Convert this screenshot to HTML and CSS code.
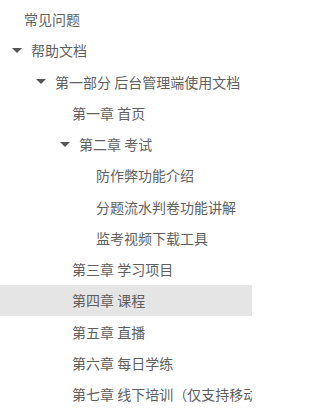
FILE: index.html
```html
<!DOCTYPE html>
<html lang="zh">
<head>
<meta charset="utf-8">
<link rel="stylesheet" href="styles.css">
</head>
<body>
<ul class="tree">
  <li class="node lvl1 leaf"><span class="label">常见问题</span></li>
  <li class="node lvl1"><svg class="caret" viewBox="0 0 10 5"><polygon points="0,0 10,0 5,5"/></svg><span class="label">帮助文档</span></li>
  <li class="node lvl2"><svg class="caret" viewBox="0 0 10 5"><polygon points="0,0 10,0 5,5"/></svg><span class="label">第一部分 后台管理端使用文档</span></li>
  <li class="node lvl3 leaf"><span class="label">第一章 首页</span></li>
  <li class="node lvl3"><svg class="caret" viewBox="0 0 10 5"><polygon points="0,0 10,0 5,5"/></svg><span class="label">第二章 考试</span></li>
  <li class="node lvl4 leaf"><span class="label">防作弊功能介绍</span></li>
  <li class="node lvl4 leaf"><span class="label">分题流水判卷功能讲解</span></li>
  <li class="node lvl4 leaf"><span class="label">监考视频下载工具</span></li>
  <li class="node lvl3 leaf"><span class="label">第三章 学习项目</span></li>
  <li class="node lvl3 leaf current"><span class="label">第四章 课程</span></li>
  <li class="node lvl3 leaf"><span class="label">第五章 直播</span></li>
  <li class="node lvl3 leaf"><span class="label">第六章 每日学练</span></li>
  <li class="node lvl3 leaf"><span class="label">第七章 线下培训（仅支持移动端）</span></li>
</ul>
</body>
</html>
```

FILE: styles.css
```css
html, body {
  margin: 0;
  padding: 0;
  background: #ffffff;
  overflow: hidden;
}
body {
  font-family: "Noto Sans CJK SC", "Noto Sans", sans-serif;
  font-size: 14px;
  color: #5f5f5f;
}
.tree {
  list-style: none;
  margin: 0;
  padding: 3.4px 0 0 0;
  overflow: hidden;
  width: 252px;
}
.node {
  display: flex;
  align-items: center;
  height: 31.25px;
  white-space: nowrap;
  box-sizing: border-box;
  overflow: hidden;
}
.lvl1 { padding-left: 12px; }
.lvl2 { padding-left: 36px; }
.lvl3 { padding-left: 60px; }
.lvl4 { padding-left: 84px; }
.leaf .label { margin-left: 12px; }
.caret {
  width: 10px;
  height: 5px;
  margin-right: 9px;
  fill: #555555;
  flex: none;
}
.label {
  line-height: 1;
  flex: none;
}
.current {
  background: #e5e5e5;
}
```
